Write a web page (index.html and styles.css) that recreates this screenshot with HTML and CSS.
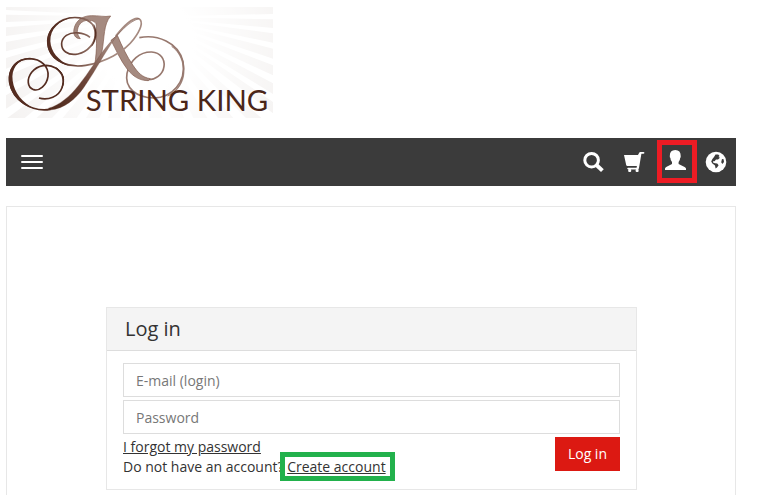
FILE: index.html
```
<!DOCTYPE html>
<html lang="en">
<head>
<meta charset="UTF-8" />
<meta name="viewport" content="width=device-width, initial-scale=1" />
<title>String King - Log in</title>
<link rel="stylesheet" href="styles.css">
</head>
<body>

<header>
  <a class="logo" href="#" aria-label="String King">
    <svg viewBox="18 21 801 333" width="267" height="111">
      <defs>
        <linearGradient id="brown" gradientUnits="userSpaceOnUse" x1="130" y1="300" x2="330" y2="130">
          <stop offset="0" stop-color="#4f2a1d" />
          <stop offset="0.5" stop-color="#6b4336" />
          <stop offset="1" stop-color="#a58a80" />
        </linearGradient>
        <linearGradient id="swirl" gradientUnits="userSpaceOnUse" x1="140" y1="0" x2="310" y2="0">
          <stop offset="0" stop-color="#552d21" />
          <stop offset="0.5" stop-color="#704a3e" />
          <stop offset="1" stop-color="#a58a80" />
        </linearGradient>
        <radialGradient id="glow" gradientUnits="userSpaceOnUse" cx="440" cy="130" r="460">
          <stop offset="0.3" stop-color="#fff" />
          <stop offset="1" stop-color="#fff" stop-opacity="0" />
        </radialGradient>
      </defs>
      <rect x="18" y="21" width="801" height="333" fill="#f5f3f2" />
      <g fill="#fff">
        <path d="M440 50L18 30V44ZM440 50L18 66V82ZM440 50L18 108V126ZM440 50L18 154V174ZM440 50L18 206V228ZM440 50L18 262V286ZM440 50L18 326V354H22ZM440 50L74 354H110ZM440 50L156 354H188ZM440 50L230 354H258ZM440 50L298 354H324ZM440 50L362 354H386ZM440 50L424 354H448ZM440 50L486 354H512Z" />
        <path d="M440 50L552 354H580ZM440 50L622 354H654ZM440 50L700 354H738ZM440 50L784 354H819V340ZM440 50L819 282V306ZM440 50L819 226V250ZM440 50L819 176V196ZM440 50L819 128V146ZM440 50L819 84V100ZM440 50L819 42V58Z" />
      </g>
      <rect x="18" y="21" width="801" height="333" fill="url(#glow)" />

      <!-- right leg and its swirl -->
      <path d="M418 113C470 102 536 126 549 185C559 248 515 293 462 294C408 293 373 262 381 220C389 181 420 155 455 156C482 158 495 177 492 199C489 224 465 241 441 239" fill="none" stroke="#97786e" stroke-width="5" />
      <path d="M515 139C548 163 559 211 542 247C533 267 519 280 503 288C527 278 544 257 550 232C559 190 543 156 515 139Z" fill="#97786e" stroke="#97786e" stroke-width="2" />
      <path d="M333 121L352 106C366 139 381 170 399 196C414 218 426 232 451 236L445 242C418 242 399 229 382 208C361 181 347 147 333 121Z" fill="#a58a80" stroke="#81594c" stroke-width="2" />

      <!-- stem -->
      <path d="M332 48C310 73 314 112 306 154L295 185L284 194C292 151 289 107 289 79C290 65 278 61 263 61C243 62 233 77 232 94C232 103 237 111 241 116C225 116 219 103 222 87C227 62 247 47 274 47C296 46 313 52 332 48Z" fill="#a58a80" stroke="#81594c" stroke-width="2" />

      <!-- upper left swirl -->
      <path d="M270 112C250 96 218 94 199 106C181 119 180 144 197 156C217 170 251 163 271 140C289 119 290 93 277 73C260 52 222 47 190 59C152 76 137 113 147 147C161 186 207 204 257 196C314 187 373 156 401 118C421 91 432 65 417 56C400 49 367 83 347 108" fill="none" stroke="url(#swirl)" stroke-width="5" />
      <path d="M218 51C177 60 139 83 141 130C143 166 172 190 211 199C174 180 153 156 151 124C150 86 177 63 218 51Z" fill="#552d21" />
      <path d="M281 73C294 93 291 122 275 139C286 119 288 96 281 73Z" fill="#552d21" stroke="#552d21" />

      <!-- long downstroke and lower left swirl -->
      <path d="M417 56C393 59 347 107 317 143C289 178 267 218 235 257C211 288 178 316 145 325L150 330C193 326 227 297 251 263C280 222 301 181 333 132C355 100 385 65 417 56Z" fill="url(#brown)" stroke="#704a3e" stroke-width="1" />
      <path d="M151 328C93 337 38 300 29 247C23 206 52 176 89 176C123 177 147 199 144 229C140 257 117 274 101 269C81 262 80 237 95 217C113 195 144 190 167 204C188 218 194 239 186 263C176 290 145 302 117 294" fill="none" stroke="#542c20" stroke-width="5" />
      <path d="M87 175C47 175 22 205 27 249C34 287 66 318 103 326C68 308 43 279 38 242C33 207 52 181 87 175Z" fill="#542c20" />
      <path d="M170 204C191 220 196 239 186 263C195 240 190 219 170 204Z" fill="#542c20" stroke="#542c20" stroke-width="3" />

      <text class="logo-text" x="257" y="332">STRING KING</text>
    </svg>
  </a>

  <nav class="navbar">
    <button class="menu-toggle" type="button" aria-label="Menu">
      <span></span>
      <span></span>
      <span></span>
    </button>
    <div class="nav-icons">
      <a href="#" aria-label="Search">
        <svg viewBox="0 0 20 20"><circle cx="8.6" cy="8.2" r="6.8" fill="none" stroke="#fff" stroke-width="3" /><path d="M13.4 13L19.4 18.6" stroke="#fff" stroke-width="4" /></svg>
      </a>
      <a href="#" aria-label="Cart">
        <svg viewBox="0 0 20 20"><path d="M0 3H14L15.2 .8Q15.5 0 16.3 0H19.4Q20.6 0 20.4 1Q20.3 1.8 19.4 1.8H17.4L15 16Q14.8 17.4 13.8 17.4H4.2Q3.2 17.4 3.2 16.6Q3.2 15.8 4.2 15.8H12.6L12.9 14H3.4Q2.4 14 2.2 13Z" /><rect x="4.2" y="17" width="3" height="3" rx="1" /><rect x="11.6" y="17" width="3" height="3" rx="1" /></svg>
      </a>
      <a class="user" href="#" aria-label="Account">
        <svg viewBox="0 0 20 20"><path d="M0 20V18.5Q.2 17.6 1.2 17L7 14V12Q5.4 10.5 5.4 8Q4.6 7.4 4.8 6Q4.6 0 10.3 0Q15.8 0 15.7 6Q15.9 7.4 15.2 8Q15 10.5 13.6 12V14L19.6 17Q20.8 17.6 21 18.5V20Z" /></svg>
        <span class="mark mark-red"></span>
      </a>
      <a href="#" aria-label="Language">
        <svg viewBox="0 0 20 20"><circle cx="10" cy="10" r="10.3" /><path d="M9.5 2.6L12.2 2.4L13.6 4L12.4 5L14 5.8L12 7.6L10 7.4L8.6 9.2L7.4 9L7 10.6L9 11.2L11.2 11.6L12.6 13.2L11 15.4L9.6 16.4L9 13.6L6.4 11.6L5.2 9.6L6.4 7L8 5ZM16 7L17.6 7.2L18 10L16.4 12L15.2 10.2Z" fill="#3b3b3b" /></svg>
      </a>
    </div>
  </nav>
</header>

<main>
  <form class="panel">
    <h1>Log in</h1>
    <div class="panel-body">
      <input type="email" aria-label="E-mail (login)" placeholder="E-mail (login)" />
      <input type="password" aria-label="Password" placeholder="Password" />
      <div class="panel-footer">
        <div>
          <a href="#">I forgot my password</a><br />
          Do not have an account? <span class="create"><a href="#">Create account</a><span class="mark mark-green"></span></span>
        </div>
        <button class="login-btn" type="submit">Log in</button>
      </div>
    </div>
  </form>
</main>

</body>
</html>
```
FILE: styles.css
```
* {
  box-sizing: border-box;
}
body {
  display: flex;
  flex-direction: column;
  min-height: 100vh;
  margin: 0;
  padding: 7px 32px 0 6px;
  background: #fff;
  color: #333;
  font-family: "Open Sans", sans-serif;
  font-size: 14px;
  line-height: 20px;
}
.logo,
.logo svg {
  display: block;
}
.logo {
  width: 267px;
  margin-bottom: 20px;
}
.logo-text {
  fill: #4b2618;
  font-family: Lato, sans-serif;
  font-size: 88px;
}
.navbar {
  display: flex;
  justify-content: space-between;
  height: 48px;
  background: #3b3b3b;
}
.menu-toggle {
  display: flex;
  flex-direction: column;
  justify-content: center;
  gap: 4px;
  padding: 0 15px;
  border: 0;
  background: none;
  cursor: pointer;
}
.menu-toggle span {
  width: 22px;
  height: 2px;
  border-radius: 1px;
  background: #fff;
}
.nav-icons {
  display: flex;
}
.nav-icons a {
  position: relative;
  display: flex;
  align-items: center;
  justify-content: center;
  width: 41px;
}
.nav-icons svg {
  width: 20px;
  height: 20px;
  fill: #fff;
  overflow: visible;
}
.nav-icons .user {
  padding-bottom: 4px;
}
.mark {
  position: absolute;
  pointer-events: none;
}
.mark-red {
  top: 2px;
  left: 3px;
  width: 40px;
  height: 43px;
  border: 5px solid #ed1c24;
}
main {
  flex: 1;
  margin-top: 20px;
  padding: 100px 98px 5px 99px;
  border: 1px solid #e7e7e7;
  border-bottom: 0;
}
.panel {
  border: 1px solid #e7e7e7;
}
h1 {
  margin: 0;
  padding: 9px 18px;
  border-bottom: 1px solid #ddd;
  background: #f4f4f4;
  font-size: 20px;
  font-weight: 400;
  line-height: 24px;
}
.panel-body {
  display: flex;
  flex-direction: column;
  gap: 3px;
  padding: 12px 16px;
}
input {
  width: 100%;
  height: 34px;
  padding: 6px 12px;
  border: 1px solid #ddd;
  border-radius: 0;
  color: #555;
  font: inherit;
}
input::placeholder {
  color: #777;
}
.panel-footer {
  display: flex;
  align-items: flex-start;
  justify-content: space-between;
}
.panel-footer a {
  color: #333;
  text-decoration: underline;
}
.create {
  position: relative;
}
.mark-green {
  inset: -5px -9px -5px -7px;
  border: 5px solid #22b14c;
}
.login-btn {
  height: 34px;
  padding: 6px 13px;
  border: 0;
  background: #dc1912;
  color: #fff;
  font: inherit;
  cursor: pointer;
}
```
